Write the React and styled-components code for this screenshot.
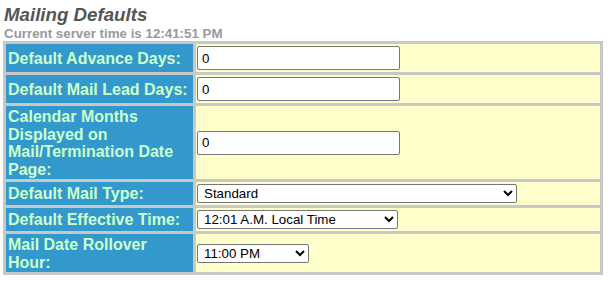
import React from 'react';
import styled, { createGlobalStyle } from 'styled-components';

const Global = createGlobalStyle`
  body {
    margin: 0;
    background: #fff;
    font-family: "Liberation Sans", Arial, sans-serif;
  }
`;

const Page = styled.div`
  padding: 4px 0 0 3px;
`;

const Title = styled.h2`
  margin: 0 0 0 1px;
  font-size: 18.7px;
  line-height: 22px;
  font-weight: bold;
  font-style: italic;
  color: #555;
`;

const ServerTime = styled.div`
  margin-left: 1px;
  font-size: 13.33px;
  line-height: 15px;
  font-weight: bold;
  color: #999;
`;

const Table = styled.table`
  width: 600px;
  border-collapse: separate;
  border-spacing: 3px;
  background: #c8c8c8;
`;

const Label = styled.td`
  width: 183px;
  padding: 2px 2px 1px;
  background: #3399cc;
  color: #ccffcc;
  font-size: 16px;
  line-height: 17.5px;
  font-weight: bold;
  vertical-align: middle;
`;

const Value = styled.td`
  padding: 2px 2px 2px 1px;
  background: #ffffcc;
  vertical-align: middle;
`;

const TextInput = styled.input`
  display: block;
  box-sizing: border-box;
  width: 203px;
  height: 24px;
  padding: 1px 4px;
  border: 1px solid #767676;
  border-radius: 2px;
  font-family: "Liberation Sans", Arial, sans-serif;
  font-size: 13.33px;
  color: #000;
  background: #fff;
`;

const Select = styled.select`
  display: block;
  box-sizing: border-box;
  width: ${p => p.w}px;
  height: 19px;
  padding: 0 2px;
  border: 1px solid #767676;
  border-radius: 2px;
  font-family: "Liberation Sans", Arial, sans-serif;
  font-size: 13.33px;
  color: #000;
  background: #fff;
`;

const rows = [
  { label: 'Default Advance Days:', field: <TextInput defaultValue="0" /> },
  { label: 'Default Mail Lead Days:', field: <TextInput defaultValue="0" /> },
  {
    label: 'Calendar Months Displayed on Mail/Termination Date Page:',
    field: <TextInput defaultValue="0" />,
  },
  {
    label: 'Default Mail Type:',
    field: (
      <Select w={320} defaultValue="Standard">
        <option>Standard</option>
      </Select>
    ),
  },
  {
    label: 'Default Effective Time:',
    field: (
      <Select w={201} defaultValue="12:01 A.M. Local Time">
        <option>12:01 A.M. Local Time</option>
      </Select>
    ),
  },
  {
    label: 'Mail Date Rollover Hour:',
    field: (
      <Select w={112} defaultValue="11:00 PM">
        <option>11:00 PM</option>
      </Select>
    ),
  },
];

export default function App() {
  return (
    <Page>
      <Global />
      <Title>Mailing Defaults</Title>
      <ServerTime>Current server time is 12:41:51 PM</ServerTime>
      <Table>
        <tbody>
          {rows.map(r => (
            <tr key={r.label}>
              <Label>{r.label}</Label>
              <Value>{r.field}</Value>
            </tr>
          ))}
        </tbody>
      </Table>
    </Page>
  );
}
